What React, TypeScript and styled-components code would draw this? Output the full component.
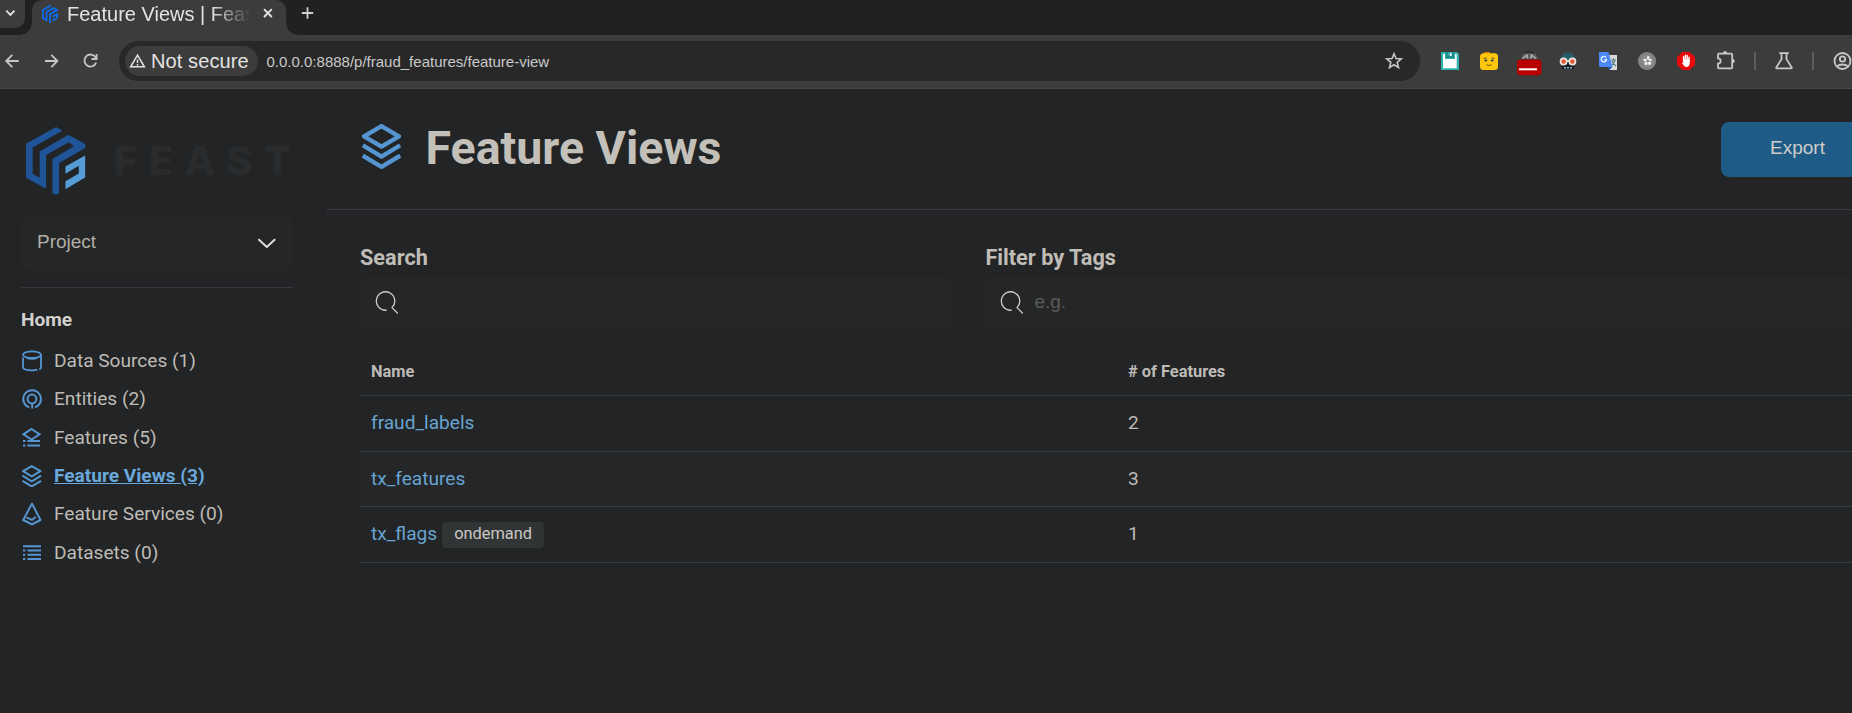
import React from 'react';
import styled, { createGlobalStyle } from 'styled-components';

const GlobalStyle = createGlobalStyle`
  * { box-sizing: border-box; }
  body { margin: 0; background: #222425; overflow: hidden; }
  svg { flex: none; display: block; }
`;

const UI_FONT = "'Liberation Sans', Arial, sans-serif";
const PAGE_FONT = "Roboto, sans-serif";

const Window = styled.div`
  width: 1852px;
  height: 713px;
  overflow: hidden;
  display: flex;
  flex-direction: column;
  background: #222425;
  font-family: ${PAGE_FONT};
  font-size: 19.1px;
  color: #bebbb6;
`;

/* Browser chrome */
const TabStrip = styled.div`
  flex: none;
  height: 35px;
  display: flex;
  background: #202221;
  font-family: ${UI_FONT};
`;
const TabSearch = styled.div`
  width: 25px;
  height: 28px;
  margin-right: 7px;
  border-radius: 0 0 10px 0;
  background: #3c3c3c;
`;
const Tab = styled.div`
  position: relative;
  width: 254px;
  height: 35px;
  padding-left: 10px;
  display: flex;
  align-items: flex-start;
  background: #3c3c3c;
  border-radius: 10px 10px 0 0;
  &::before, &::after {
    content: '';
    position: absolute;
    bottom: 0;
    width: 12px;
    height: 12px;
  }
  &::before { left: -12px; background: radial-gradient(circle at 0 0, transparent 11.5px, #3c3c3c 12px); }
  &::after { right: -12px; background: radial-gradient(circle at 100% 0, transparent 11.5px, #3c3c3c 12px); }
`;
const TabTitle = styled.div`
  flex: none;
  width: 194px;
  margin-left: 9px;
  overflow: hidden;
  white-space: nowrap;
  font-size: 20px;
  line-height: 28px;
  color: #e3e3e3;
  mask-image: linear-gradient(90deg, #000 144px, transparent 184px);
`;
const Toolbar = styled.div`
  flex: none;
  height: 54px;
  padding: 6px 0 7px;
  display: flex;
  align-items: center;
  background: #3c3c3c;
  border-bottom: 1px solid #474848;
  font-family: ${UI_FONT};
`;
const NavButtons = styled.div`
  flex: none;
  width: 119px;
  display: flex;
  gap: 15px;
  align-items: center;
`;
const AddressBar = styled.div`
  flex: none;
  width: 1301px;
  height: 40px;
  padding: 0 16px 0 6px;
  display: flex;
  align-items: center;
  background: #282828;
  border-radius: 20px;
`;
const SecurityChip = styled.div`
  width: 133px;
  height: 30px;
  padding-left: 4px;
  display: flex;
  align-items: center;
  gap: 5px;
  border-radius: 15px;
  background: #3c3c3c;
  color: #e3e3e3;
  font-size: 20px;
  letter-spacing: 0.1px;
  line-height: 30px;
  white-space: nowrap;
`;
const Url = styled.div`
  flex: 1;
  margin-left: 8.5px;
  font-size: 15px;
  color: #c9c9c9;
`;
const Extensions = styled.div`
  flex: none;
  display: flex;
  align-items: center;
  gap: 11.4px;
  margin-left: 16px;
`;
const Divider = styled.div`
  width: 2px;
  height: 18px;
  margin: 0 2.8px;
  background: #5e5e5e;
`;

/* Page */
const Page = styled.div`
  flex: 1;
  display: flex;
  min-height: 0;
`;
const Sidebar = styled.aside`
  flex: none;
  width: 327px;
  padding: 38px 33px 0 21px;
  border-right: 1px solid #27282a;
`;
const Brand = styled.div`
  height: 68px;
  padding-left: 5px;
  display: flex;
  align-items: center;
`;
const Wordmark = styled.div`
  margin: 0 0 0 28.5px;
  font-family: Inter, sans-serif;
  font-weight: 800;
  font-size: 40px;
  line-height: 48px;
  letter-spacing: 11.4px;
  color: #292b2d;
  white-space: nowrap;
`;
const ProjectSelect = styled.div`
  height: 54px;
  margin-top: 21px;
  padding: 0 16px 2px;
  display: flex;
  align-items: center;
  justify-content: space-between;
  border-radius: 7px;
  background: #242628;
  font-family: ${UI_FONT};
  font-size: 19px;
  color: #b3aea6;
`;
const Rule = styled.div`
  height: 1px;
  margin-top: 17px;
  background: #37393c;
`;
const NavHeading = styled.div`
  margin-top: 20px;
  height: 24px;
  line-height: 24px;
  font-weight: 700;
  color: #d3d1ce;
`;
const NavList = styled.nav`
  margin-top: 9.4px;
`;
const NavItem = styled.a<{ $active?: boolean }>`
  height: 38.3px;
  display: flex;
  align-items: center;
  gap: 11px;
  color: ${(p) => (p.$active ? '#6aa8dc' : '#bebbb6')};
  font-weight: ${(p) => (p.$active ? 700 : 400)};
  text-decoration: ${(p) => (p.$active ? 'underline' : 'none')};
  white-space: nowrap;
`;
const NavIcon = styled.span`
  width: 22px;
  padding-top: 1px;
  display: flex;
  justify-content: center;
`;
const Main = styled.main`
  flex: none;
  width: 1560px;
`;
const PageHeader = styled.header`
  height: 121px;
  padding: 33px 13px 0 35px;
  display: flex;
  align-items: flex-start;
  border-bottom: 1px solid #3b3c48;
`;
const HeaderIcon = styled.div`
  margin-top: 1.5px;
`;
const Title = styled.h1`
  flex: 1;
  margin: -1px 0 0 24.5px;
  font-size: 46.5px;
  line-height: 55px;
  font-weight: 700;
  color: #c3c0ba;
`;
const ExportButton = styled.button`
  width: 153px;
  height: 55px;
  padding: 0 0 3px;
  border: 0;
  border-radius: 8px;
  background: #1e5b87;
  font-family: ${UI_FONT};
  font-size: 19px;
  color: #cfcdc9;
`;
const Filters = styled.section`
  padding: 34px 0 0 33px;
  display: grid;
  grid-template-columns: 591px 900px;
  column-gap: 34.4px;
`;
const Label = styled.div`
  height: 32px;
  line-height: 28px;
  font-size: 21.7px;
  font-weight: 700;
  color: #c0bdb7;
`;
const SearchField = styled.div`
  height: 54px;
  padding: 0 0 2px 15px;
  display: flex;
  align-items: center;
  gap: 10px;
  border-radius: 7px;
  background: #242628;
  font-family: ${UI_FONT};
  font-size: 19px;
  color: #5b5b59;
  span { margin-top: -1px; }
`;
const Table = styled.div`
  margin: 17px 0 0 33px;
`;
const Row = styled.div<{ $head?: boolean; $striped?: boolean; $height: number }>`
  height: ${(p) => p.$height}px;
  padding: 0 0 ${(p) => (p.$head ? 0 : 2)}px 11px;
  display: grid;
  grid-template-columns: 757px 1fr;
  align-items: center;
  border-bottom: 1px solid #373c49;
  background: ${(p) => (p.$striped ? '#242628' : 'transparent')};
  font-size: ${(p) => (p.$head ? '16.4px' : '19.1px')};
  font-weight: ${(p) => (p.$head ? 700 : 400)};
`;
const Cell = styled.div`
  display: flex;
  align-items: center;
`;
const ViewLink = styled.a`
  color: #68a4d2;
`;
const Badge = styled.span`
  height: 26px;
  margin: 3px 0 0 5px;
  padding: 0 12px;
  line-height: 23px;
  border-radius: 4px;
  background: #303435;
  font-size: 16.4px;
  color: #c9c7c3;
`;

const FeastMark = ({ size, dark, light }: { size: number; dark: string; light: string }) => (
  <svg width={size} height={(size * 204) / 178} viewBox="78 82 178 204">
    <path fill={dark} d="M168 82L187 93L98 143V222L119 234V155L205 105L255 133V145L177 190V280L168 285L157 280V178L222 139L205 128L138 166V267L78 234V132Z" />
    <path fill={light} d="M255 167V233L196 268V244L236 221V198L196 222V200Z" />
  </svg>
);

const LayersIcon = ({ size, width }: { size: number; width: number }) => (
  <svg width={size} height={(size * 44) / 38} viewBox="0 0 38 44" fill="none" stroke="#5596d2" strokeWidth={width} strokeLinejoin="round">
    <path d="M19 2L36 12L19 22L2 12Z" />
    <path d="M.8 20.8L19 31.8L37.2 20.8M.8 30.8L19 41.8L37.2 30.8" />
  </svg>
);

const small = { width: 22, height: 22, viewBox: '0 0 22 22', fill: 'none', stroke: '#5596d2', strokeWidth: 2 };

const DataSourceIcon = () => (
  <svg {...small} strokeWidth={1.8}>
    <ellipse cx="11" cy="4.7" rx="9" ry="3.3" />
    <path d="M2 7.6V17C2 20.6 12.5 20.9 16.3 19.7M18.3 19.4C20 19 20 18 20 16.7V4.7M6 8.2C9 9 13 9 16 8.2" />
  </svg>
);
const EntityIcon = () => (
  <svg {...small}>
    <path d="M8.2 19.3A8.8 8.8 0 1 1 14 19.3" />
    <circle cx="11" cy="11" r="4.4" />
    <path d="M11.2 15.3V20.6" />
  </svg>
);
const FeatureIcon = () => (
  <svg {...small}>
    <path d="M10.5 2L18.6 7.3L10.5 12.6L2.4 7.3Z" />
    <path d="M2 14H4.4M6.4 14H19M2 18.5H4.4M6.4 18.5H19" />
  </svg>
);
const ServiceIcon = () => (
  <svg {...small} height={24} viewBox="0 0 22 24">
    <path d="M11 1.6L19.5 18L11 22.4L2.2 18Z" strokeLinejoin="round" />
    <path d="M5.4 15.4L11 17.9L14.8 14.8" />
  </svg>
);
const DatasetIcon = () => (
  <svg {...small}>
    <path d="M2 4.3H20M2 8.6H4.3M6.5 8.6H20M2 12.8H4.3M6.5 12.8H20M2 17H4.3M6.5 17H20" />
  </svg>
);

const SearchIcon = () => (
  <svg width="24" height="24" viewBox="0 0 24 24" fill="none" stroke="#d0ceca" strokeWidth="1.3" strokeLinecap="round">
    <path d="M11.3 20.2A9.2 9.2 0 1 1 17 17.6L22.4 23" />
  </svg>
);

const chrome = { width: 24, height: 24, viewBox: '0 0 24 24', fill: 'none', stroke: '#c7c7c7', strokeWidth: 1.8 };

const App = () => (
  <Window>
    <GlobalStyle />
    <TabStrip>
      <TabSearch>
        <svg width="25" height="28" viewBox="0 0 25 28" fill="none" stroke="#e3e3e3" strokeWidth="1.9">
          <path d="M6.3 10.7L10.4 14.8L14.5 10.7" />
        </svg>
      </TabSearch>
      <Tab>
        <svg width="16" height="28" viewBox="0 0 16 28">
          <g transform="translate(0 5) scale(.09) translate(-78 -82)">
            <path fill="#0b6cf0" d="M168 82L187 93L98 143V222L119 234V155L205 105L255 133V145L177 190V280L168 285L157 280V178L222 139L205 128L138 166V267L78 234V132Z" />
            <path fill="#0b6cf0" d="M255 167V233L196 268V244L236 221V198L196 222V200Z" />
          </g>
        </svg>
        <TabTitle>Feature Views | Feast</TabTitle>
        <svg width="20" height="28" viewBox="0 0 20 28" fill="none" stroke="#e3e3e3" strokeWidth="1.9">
          <path d="M3 9.2L10.8 17M10.8 9.2L3 17" />
        </svg>
      </Tab>
      <svg width="42" height="28" viewBox="0 0 42 28" fill="none" stroke="#d0d0d0" strokeWidth="1.8">
        <path d="M15.8 13H27.2M21.5 7.3V18.7" />
      </svg>
    </TabStrip>
    <Toolbar>
      <NavButtons>
        <svg {...chrome}><path d="M18.7 12H6.5M12.3 5.9L6.2 12L12.3 18.1" /></svg>
        <svg {...chrome}><path d="M6 12H18.2M12.3 5.9L18.4 12L12.3 18.1" /></svg>
        <svg {...chrome}><path d="M17.7 8.6A6 6 0 1 0 18.1 13.6M18.6 5V10H13.5" /></svg>
      </NavButtons>
      <AddressBar>
        <SecurityChip>
          <svg width="17" height="16" viewBox="0 0 17 16" fill="none" stroke="#e3e3e3" strokeWidth="1.5">
            <path d="M8.5 2.2L15.4 13.8H1.6ZM8.5 6.4V10M8.5 11.1V12.5" />
          </svg>
          Not secure
        </SecurityChip>
        <Url>0.0.0.0:8888/p/fraud_features/feature-view</Url>
        <svg width="20" height="20" viewBox="0 0 20 20" fill="none" stroke="#c7c7c7" strokeWidth="1.6">
          <path d="M10 2.8L12 7.6L17.2 8L13.2 11.4L14.5 16.5L10 13.8L5.5 16.5L6.8 11.4L2.8 8L8 7.6Z" />
        </svg>
      </AddressBar>
      <Extensions>
        <svg width="28" height="28" viewBox="0 0 28 28">
          <path fill="#2fb0ad" d="M5 5H21L23 7V23H5Z" />
          <path fill="#fff" d="M7 7H9V12H19V7H20.7V21.3H7Z" />
          <path fill="#1e8d8b" d="M10 5H12V9H16V5H18V11H10Z" />
          <path fill="#fff" d="M14 6H15.5V9H14Z" />
        </svg>
        <svg width="28" height="28" viewBox="0 0 28 28">
          <rect x="9" y="5" width="6" height="4" rx="1" fill="#f57c00" />
          <rect x="5" y="6.3" width="18" height="16.7" rx="3.5" fill="#fdc70c" />
          <path d="M8.5 11.5L11.5 10.8M16.5 10.8L19.5 11.5M11.5 17.8Q14 19.2 16.5 17.8" stroke="#76540b" fill="none" />
          <ellipse cx="10.8" cy="13.5" rx="1.6" ry="1.1" fill="#344267" />
          <ellipse cx="17.2" cy="13.5" rx="1.6" ry="1.1" fill="#344267" />
        </svg>
        <svg width="28" height="32" viewBox="0 0 28 32">
          <path d="M6 14A8.5 7 0 0 1 23 14Z" fill="#595959" />
          <path d="M7.5 13.5L12 10L12.7 13.5M15.8 13.5L16.5 10L21 13.5" stroke="#b5b5b5" fill="none" strokeWidth="1.4" />
          <path d="M10 8.2Q14.3 6 18.6 8.2" stroke="#222" fill="none" strokeWidth="1.4" />
          <rect x="2" y="14.5" width="24.4" height="15.8" rx="3.5" fill="#b90000" />
          <path d="M4 24.3H22" stroke="#fff" strokeWidth="2" />
        </svg>
        <svg width="28" height="28" viewBox="0 0 28 28">
          <path d="M6 13Q7 5.8 14 5.8Q21 5.8 22 13Z" fill="#285b68" />
          <path d="M8 13H20V22H8Z" fill="#171d20" />
          <path d="M10 20.8H18.5" stroke="#7fb4bf" strokeWidth="1.6" strokeDasharray="2 1" />
          <path d="M12 14H16" stroke="#efe8e3" strokeWidth="1.6" />
          <circle cx="9.6" cy="14.5" r="3.1" fill="#e65438" stroke="#efe8e3" strokeWidth="1.6" />
          <circle cx="18.4" cy="14.5" r="3.1" fill="#e65438" stroke="#efe8e3" strokeWidth="1.6" />
        </svg>
        <svg width="28" height="28" viewBox="0 0 28 28">
          <path d="M12 8H23V23H16Z" fill="#dadada" />
          <path d="M17 13H22M19.5 11V13M21 13Q20 17 17 19M18 14Q19 17 22 19" stroke="#5b7f88" strokeWidth="1.2" fill="none" />
          <path d="M5 5H14.5L18.5 20H6.5Q5 20 5 18.5Z" fill="#4a89f3" />
          <path d="M13.5 20H18.5L15 23Z" fill="#2d50a8" />
          <path d="M12.2 10.6A2.7 2.7 0 1 0 12.6 12.6H10.3" stroke="#e7efff" strokeWidth="1.4" fill="none" />
        </svg>
        <svg width="28" height="28" viewBox="0 0 28 28">
          <circle cx="14" cy="14" r="9" fill="#8b8b8b" />
          <circle cx="14" cy="14" r="7.2" fill="none" stroke="#777" />
          <g fill="#f1f1f1">
            <ellipse cx="15.2" cy="11" rx="1.4" ry="1.9" />
            <ellipse cx="12" cy="13" rx="1.7" ry="1.2" />
            <ellipse cx="13" cy="16.4" rx="1.5" ry="1.8" />
            <ellipse cx="16.5" cy="16.2" rx="1.6" ry="1.7" />
            <ellipse cx="17.4" cy="13" rx="1.6" ry="1.1" />
          </g>
        </svg>
        <svg width="28" height="28" viewBox="0 0 28 28">
          <path d="M10.3 5H17.7L23 10.3V17.7L17.7 23H10.3L5 17.7V10.3Z" fill="#e90b0b" />
          <path d="M11.6 14V9.8M13.4 14V8.3M15.2 14V8.5M17 14V10.2" stroke="#fff" strokeWidth="1.4" strokeLinecap="round" />
          <path d="M11 12.5H17.7V16Q17.5 20 14.4 20Q12.4 20 9.8 15.8L10.6 15.2L11.6 16Z" fill="#fff" />
        </svg>
        <svg width="28" height="28" viewBox="0 0 28 28" fill="none" stroke="#c7c7c7" strokeWidth="1.8">
          <path d="M6.2 6.7H19.3Q20.2 6.7 20.2 7.6V20.4Q20.2 21.3 19.3 21.3H7Q6 21.3 6 20.4V16.6C9.6 16.5 9.6 11.5 6 11.3V7.6Q6 6.7 7 6.7" />
          <path d="M11.3 6.4A1.8 1.8 0 0 1 14.9 6.4ZM20.5 12.2A1.8 1.8 0 0 1 20.5 15.8Z" fill="#c7c7c7" strokeWidth="1" />
        </svg>
        <Divider />
        <svg width="28" height="28" viewBox="0 0 28 28" fill="none" stroke="#c7c7c7" strokeWidth="1.8">
          <path d="M9.3 6.2H18.8M11.5 6.2V12.3L6.3 20.3Q6 21.4 7.2 21.4H21Q22 21.4 21.7 20.3L16.5 12.3V6.2" />
        </svg>
        <Divider />
        <svg width="28" height="28" viewBox="0 0 28 28" fill="none" stroke="#c7c7c7" strokeWidth="1.8">
          <circle cx="14.5" cy="14" r="8" />
          <circle cx="14.5" cy="12" r="2.7" />
          <path d="M9 19.5C11.5 16.8 17.5 16.8 20 19.5" />
        </svg>
      </Extensions>
    </Toolbar>
    <Page>
      <Sidebar>
        <Brand>
          <FeastMark size={59.5} dark="#1f5499" light="#559bd6" />
          <Wordmark>FEAST</Wordmark>
        </Brand>
        <ProjectSelect>
          <span>Project</span>
          <svg width="20" height="20" viewBox="0 0 20 20" fill="none" stroke="#dedcda" strokeWidth="2" strokeLinecap="round" strokeLinejoin="round">
            <path d="M2 7.7L9.8 15L17.6 7.7" />
          </svg>
        </ProjectSelect>
        <Rule />
        <NavHeading>Home</NavHeading>
        <NavList>
          <NavItem><NavIcon><DataSourceIcon /></NavIcon>Data Sources (1)</NavItem>
          <NavItem><NavIcon><EntityIcon /></NavIcon>Entities (2)</NavItem>
          <NavItem><NavIcon><FeatureIcon /></NavIcon>Features (5)</NavItem>
          <NavItem $active><NavIcon><LayersIcon size={19.5} width={3.9} /></NavIcon>Feature Views (3)</NavItem>
          <NavItem><NavIcon><ServiceIcon /></NavIcon>Feature Services (0)</NavItem>
          <NavItem><NavIcon><DatasetIcon /></NavIcon>Datasets (0)</NavItem>
        </NavList>
      </Sidebar>
      <Main>
        <PageHeader>
          <HeaderIcon><LayersIcon size={39} width={4.2} /></HeaderIcon>
          <Title>Feature Views</Title>
          <ExportButton>Export</ExportButton>
        </PageHeader>
        <Filters>
          <div>
            <Label>Search</Label>
            <SearchField><SearchIcon /></SearchField>
          </div>
          <div>
            <Label>Filter by Tags</Label>
            <SearchField><SearchIcon /><span>e.g.</span></SearchField>
          </div>
        </Filters>
        <Table>
          <Row $head $height={49}><Cell>Name</Cell><Cell># of Features</Cell></Row>
          <Row $height={56}><Cell><ViewLink>fraud_labels</ViewLink></Cell><Cell>2</Cell></Row>
          <Row $striped $height={55}><Cell><ViewLink>tx_features</ViewLink></Cell><Cell>3</Cell></Row>
          <Row $height={56}><Cell><ViewLink>tx_flags</ViewLink><Badge>ondemand</Badge></Cell><Cell>1</Cell></Row>
        </Table>
      </Main>
    </Page>
  </Window>
);

export default App;
